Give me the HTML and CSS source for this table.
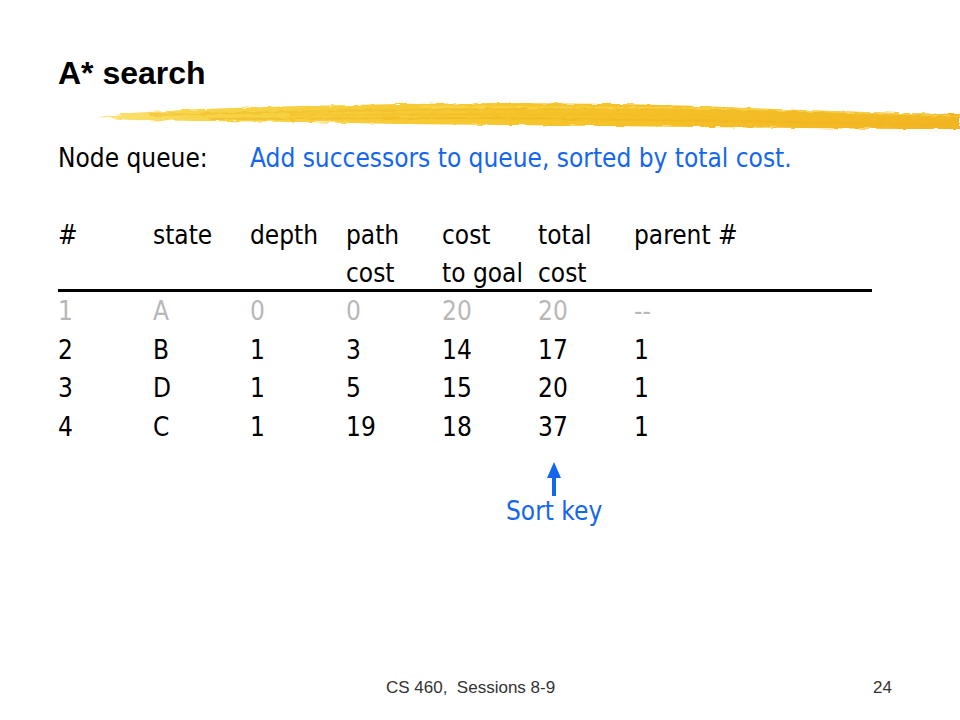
FILE: index.html
```
<!DOCTYPE html>
<html>
<head>
<meta charset="utf-8">
<link rel="stylesheet" href="styles.css">
</head>
<body>
<div class="slide">
  <h1 class="title">A* search</h1>
  <svg class="brush" viewBox="0 0 870 40" width="870" height="40">
    <defs>
      <linearGradient id="g" x1="0" y1="0" x2="1" y2="0">
        <stop offset="0" stop-color="#fae37a"/>
        <stop offset="0.12" stop-color="#f8d448"/>
        <stop offset="0.5" stop-color="#f6c52a"/>
        <stop offset="1" stop-color="#f2b522"/>
      </linearGradient>
      <filter id="rough" x="-2%" y="-30%" width="104%" height="160%">
        <feTurbulence type="fractalNoise" baseFrequency="0.08 0.5" numOctaves="2" seed="4"/>
        <feDisplacementMap in="SourceGraphic" scale="4"/>
      </filter>
    </defs>
    <g filter="url(#rough)">
      <path d="M8 22 L40 18 L110 14 L210 11 L310 9 L410 8 L530 9 L610 11 L710 15 L810 18 L870 19 L870 34 L810 34 L710 33 L610 32 L510 31 L410 30 L310 29 L210 27 L110 26 L40 25 Z" fill="url(#g)"/>
      <path d="M60 20 L300 15 L560 14 L860 23" stroke="#f0bd2a" stroke-width="2" fill="none" opacity="0.6"/>
      <path d="M120 24 L400 23 L650 26 L860 30" stroke="#eeb21e" stroke-width="2" fill="none" opacity="0.55"/>
      <path d="M330 12 L620 13 L870 21" stroke="#f9da5a" stroke-width="1.5" fill="none" opacity="0.7"/>
      <path d="M200 20 L500 19 L760 24" stroke="#f3bc26" stroke-width="2.5" fill="none" opacity="0.5"/>
    </g>
  </svg>
  <div class="queue">
    <span class="label">Node queue:</span>
    <span class="blue">Add successors to queue, sorted by total cost.</span>
  </div>
  <div class="table">
    <div class="row head"><span>#</span><span>state</span><span>depth</span><span>path</span><span>cost</span><span>total</span><span>parent #</span></div>
    <div class="row head rule"><span></span><span></span><span></span><span>cost</span><span>to goal</span><span>cost</span><span></span></div>
    <div class="row dim"><span>1</span><span>A</span><span>0</span><span>0</span><span>20</span><span>20</span><span>--</span></div>
    <div class="row"><span>2</span><span>B</span><span>1</span><span>3</span><span>14</span><span>17</span><span>1</span></div>
    <div class="row"><span>3</span><span>D</span><span>1</span><span>5</span><span>15</span><span>20</span><span>1</span></div>
    <div class="row"><span>4</span><span>C</span><span>1</span><span>19</span><span>18</span><span>37</span><span>1</span></div>
  </div>
  <div class="sortkey">
    <svg class="arrow" viewBox="0 0 14 34" width="14" height="34">
      <path d="M7 0 L14 16 L9 16 L9 34 L5 34 L5 16 L0 16 Z" fill="#1466ee"/>
    </svg>
    <span class="blue">Sort key</span>
  </div>
  <div class="footer">
    <span class="course">CS 460,&nbsp; Sessions 8-9</span>
    <span class="page">24</span>
  </div>
</div>
</body>
</html>
```
FILE: styles.css
```
html, body {
  margin: 0;
  padding: 0;
  background: #fff;
}
.slide {
  width: 960px;
  height: 720px;
  box-sizing: border-box;
  padding: 54px 0 22px 58px;
  display: flex;
  flex-direction: column;
  font-family: "DejaVu Sans Condensed", "DejaVu Sans", sans-serif;
  font-size: 26px;
  color: #000;
  overflow: hidden;
}
.title {
  margin: 0;
  font-family: "Liberation Sans", Arial, sans-serif;
  font-weight: bold;
  font-size: 32px;
  line-height: 38px;
}
.brush {
  display: block;
  margin: 3px 0 0 32px;
}
.queue {
  display: flex;
  margin-top: 4px;
  line-height: 38px;
}
.label {
  width: 192px;
  flex: none;
}
.blue {
  color: #1466ee;
}
.table {
  margin-top: 39px;
  width: 814px;
}
.row {
  display: grid;
  grid-template-columns: 95px 97px 96px 96px 96px 96px 1fr;
  height: 38.5px;
  line-height: 38.5px;
  white-space: nowrap;
}
.row.head {
  height: 38px;
  line-height: 38px;
}
.row.rule {
  height: 35px;
  line-height: 38px;
  border-bottom: 3px solid #000;
}
.row.dim {
  color: #b8b8b8;
}
.sortkey {
  margin: 16px 0 0 448px;
  display: flex;
  flex-direction: column;
  align-items: center;
  width: max-content;
  white-space: nowrap;
}
.arrow {
  display: block;
}
.sortkey .blue {
  line-height: 30px;
}
.footer {
  margin-top: auto;
  display: flex;
  align-items: baseline;
  font-family: "Liberation Sans", Arial, sans-serif;
  color: #333;
  line-height: 20px;
}
.course {
  margin-left: 328px;
  font-size: 17px;
  width: 487px;
}
.page {
  font-size: 17px;
}
```
